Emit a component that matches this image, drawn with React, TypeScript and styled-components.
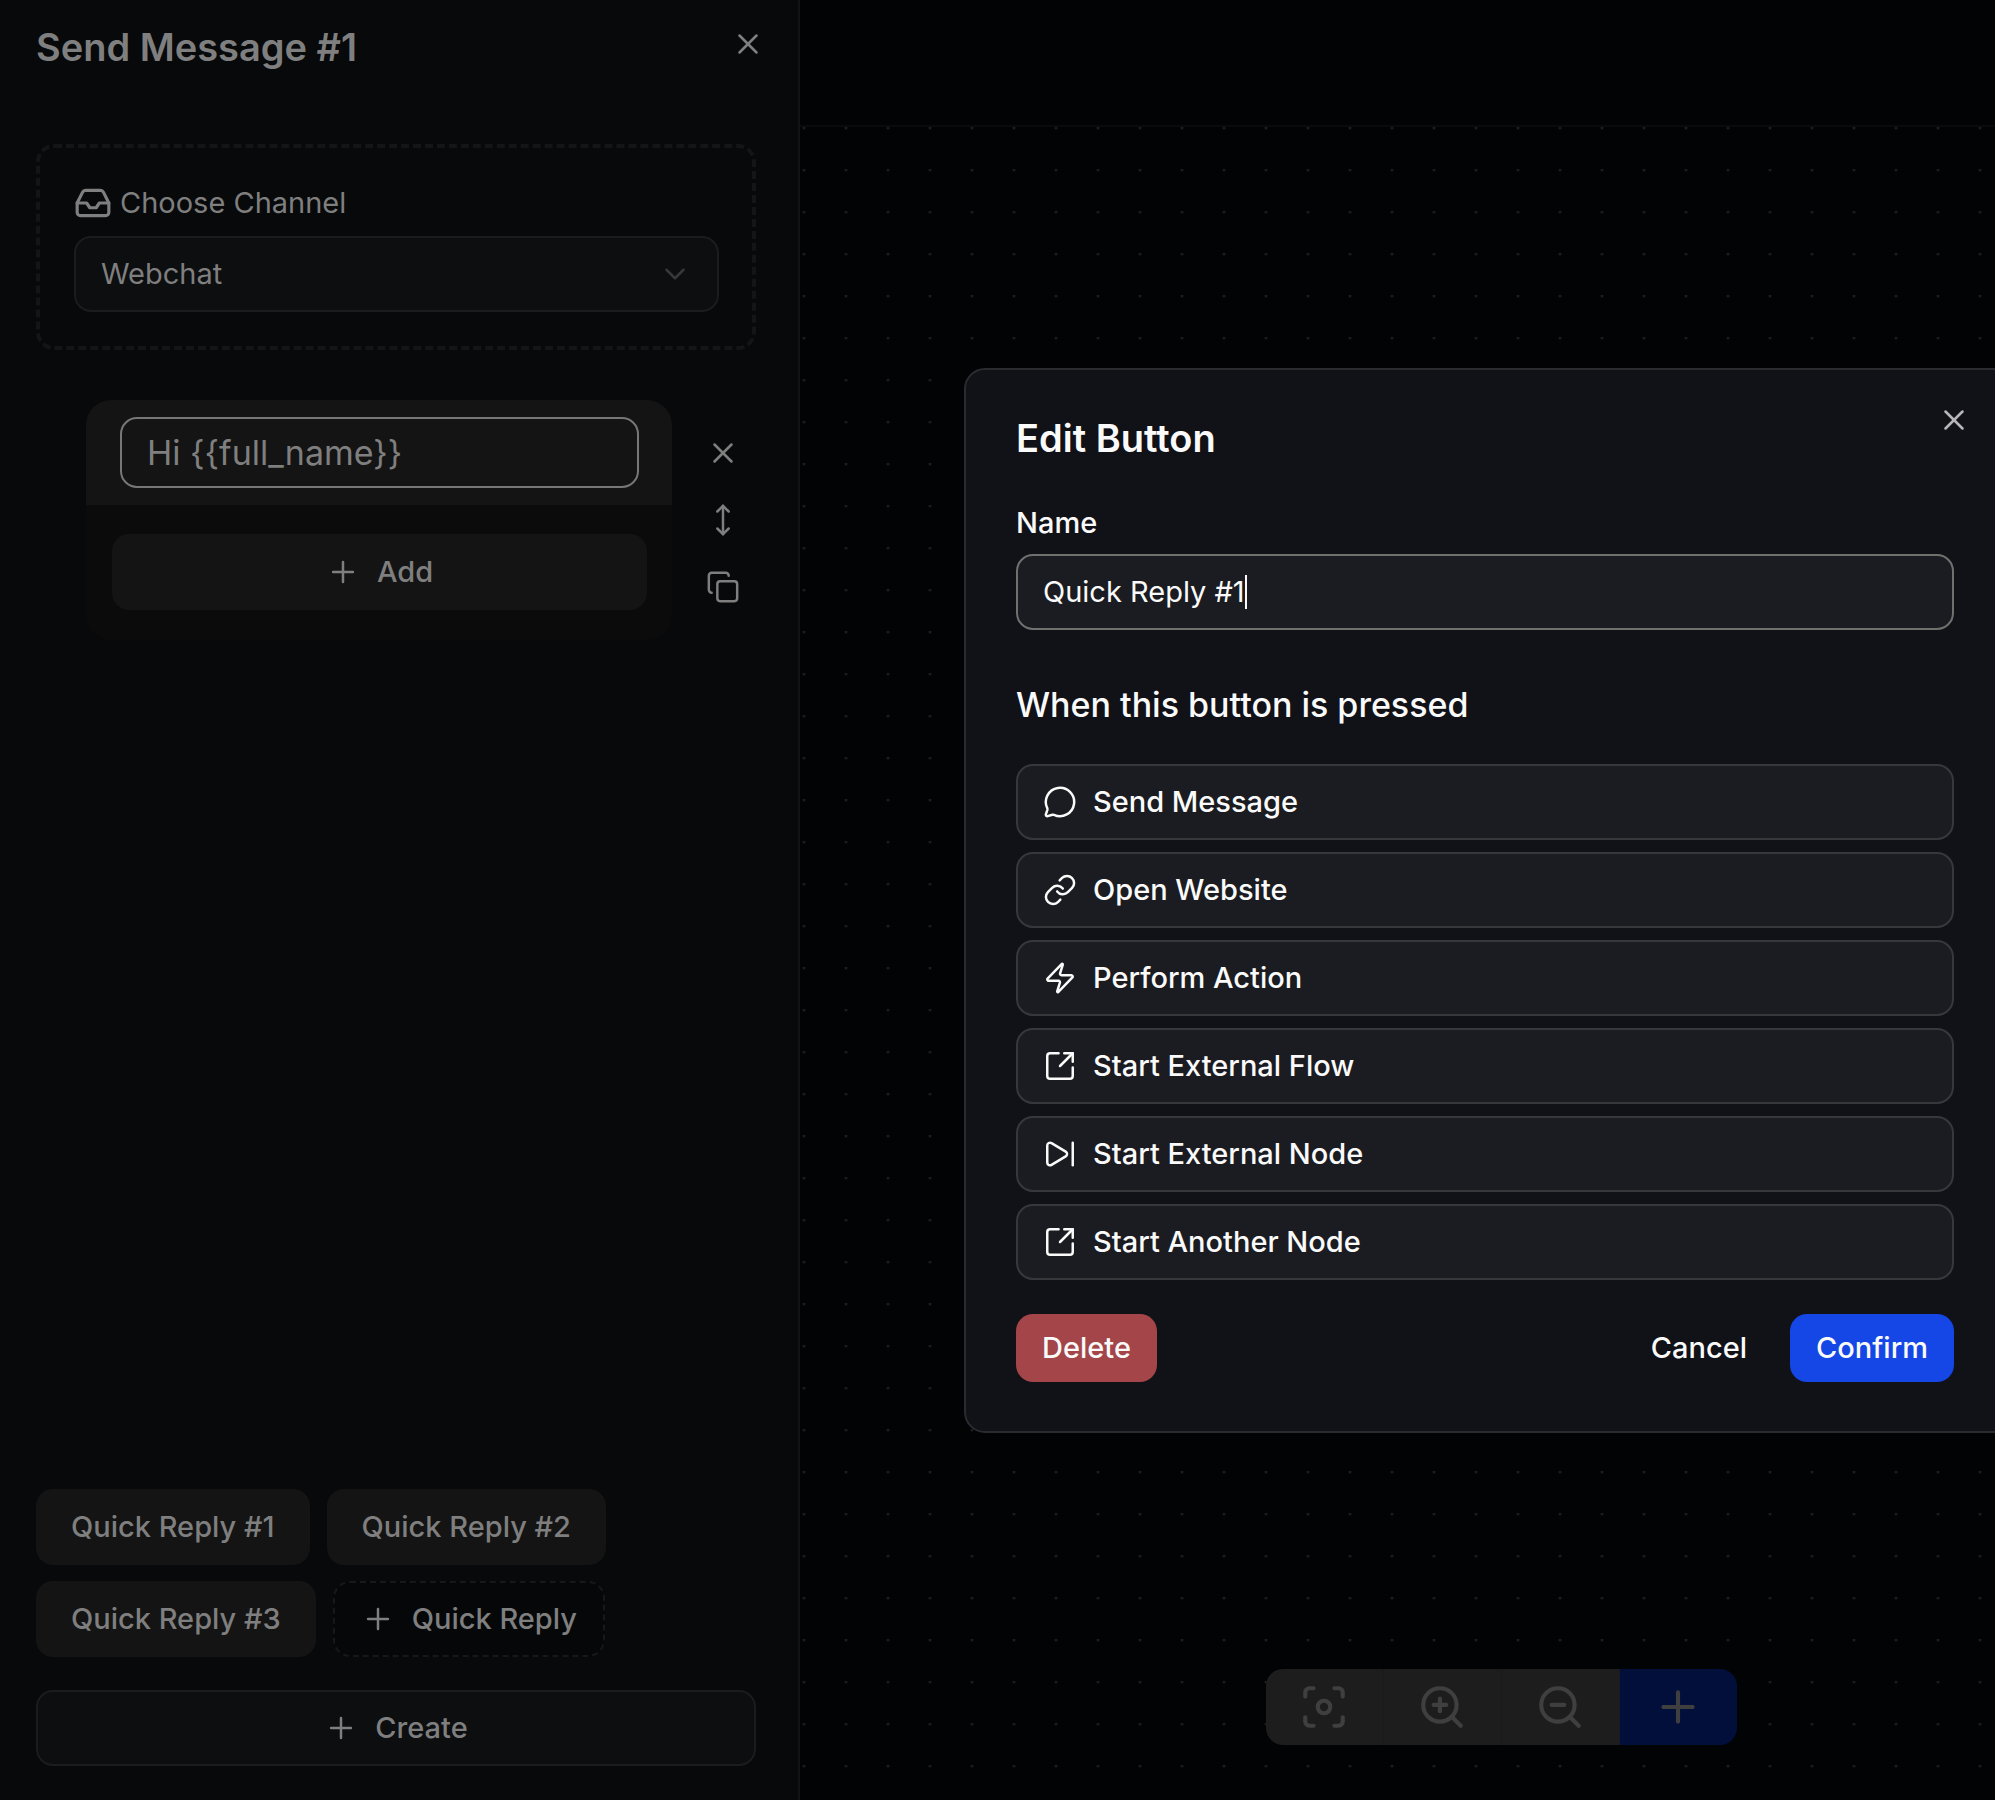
import React, { useState } from 'react';
import styled, { createGlobalStyle, css } from 'styled-components';
import {
  ChevronDown,
  Copy,
  Focus,
  Inbox,
  Link,
  MessageCircle,
  MoveVertical,
  Plus,
  SkipForward,
  SquareArrowOutUpRight,
  X,
  Zap,
  ZoomIn,
  ZoomOut,
} from 'lucide-react';

const color = {
  panel: '#08090b',
  panelLine: '#111214',
  canvas: '#020305',
  muted: '#7f7f7f',
  chip: '#141414',
  modal: '#111118',
  field: '#1b1c21',
  fieldLine: '#37383c',
};

const GlobalStyle = createGlobalStyle`
  * { box-sizing: border-box; }
  body {
    margin: 0;
    background: ${color.canvas};
    font-family: Inter, "Liberation Sans", sans-serif;
    font-size: 29px;
    line-height: 42px;
  }
  button, input, select {
    font: inherit;
    color: inherit;
    margin: 0;
    outline: none;
  }
  button { cursor: pointer; }
`;

const Screen = styled.div`
  position: relative;
  display: flex;
  min-height: 100vh;
  overflow: hidden;
`;

const Panel = styled.aside`
  display: flex;
  flex-direction: column;
  flex: 0 0 auto;
  width: 800px;
  background: ${color.panel};
  border-right: 2px solid ${color.panelLine};
  color: ${color.muted};
`;

const PanelHeader = styled.header`
  display: flex;
  justify-content: space-between;
  align-items: flex-start;
  padding: 24px 30px 0 36px;
`;

const PanelTitle = styled.h1`
  margin: 0;
  font-size: 38px;
  font-weight: 600;
  line-height: 46px;
`;

const IconButton = styled.button`
  display: grid;
  place-items: center;
  width: 40px;
  height: 40px;
  padding: 0;
  border: 0;
  background: none;
`;

const PanelBody = styled.div`
  display: flex;
  flex-direction: column;
  flex: 1;
  gap: 50px;
  padding: 74px 42px 0 36px;
`;

const ChannelBox = styled.section`
  display: flex;
  flex-direction: column;
  gap: 12px;
  padding: 34px 33px 34px 34px;
  border: 4px dashed #141517;
  border-radius: 18px;
`;

const ChannelLabel = styled.label`
  display: flex;
  align-items: center;
  gap: 8px;
`;

const SelectWrap = styled.div`
  display: grid;
  align-items: center;
  > * { grid-area: 1 / 1; }
  > svg {
    justify-self: end;
    margin-right: 27px;
    color: #37383a;
    pointer-events: none;
  }
`;

const ChannelSelect = styled.select`
  appearance: none;
  width: 100%;
  height: 76px;
  padding: 0 25px;
  border: 2px solid #1b1c1e;
  border-radius: 17px;
  background: #0d0e10;
`;

const MessageBlock = styled.section`
  display: flex;
  gap: 31px;
  padding: 0 13px 0 50px;
`;

const MessageCard = styled.div`
  flex: 1;
  border-radius: 25px;
  overflow: hidden;
  background: #0b0b0b;
`;

const MessageHead = styled.div`
  padding: 17px 33px 17px 34px;
  background: ${color.chip};
`;

const MessageInput = styled.input`
  display: block;
  width: 100%;
  height: 71px;
  padding: 0 25px;
  border: 2px solid #777;
  border-radius: 17px;
  background: transparent;
  font-size: 34px;
`;

const MessageBody = styled.div`
  padding: 29px 25px 30px 26px;
`;

const BlockActions = styled.div`
  display: flex;
  flex-direction: column;
  gap: 27px;
  padding-top: 33px;
`;

const PanelFooter = styled.footer`
  display: flex;
  flex-direction: column;
  gap: 33px;
  padding: 34px 42px 34px 36px;
`;

const ReplyList = styled.div`
  display: flex;
  flex-wrap: wrap;
  gap: 16px 17px;
`;

const PanelButton = styled.button<{ $kind?: 'solid' | 'dashed' | 'outline'; $wide?: boolean }>`
  display: flex;
  align-items: center;
  justify-content: center;
  gap: 17px;
  height: 76px;
  width: ${(p) => (p.$wide ? '100%' : 'auto')};
  padding: 0 35px;
  border: 0;
  border-radius: 17px;
  background: ${color.chip};
  font-weight: 500;
  ${(p) =>
    p.$kind === 'dashed' &&
    css`
      padding: 0 26px;
      border: 2px dashed #17181a;
      background: #050709;
    `}
  ${(p) =>
    p.$kind === 'outline' &&
    css`
      border: 2px solid #1b1c1e;
      background: #0d0e10;
    `}
`;

const Workspace = styled.main`
  display: flex;
  flex-direction: column;
  flex: 1;
  min-width: 0;
  background: ${color.canvas};
`;

const TopBar = styled.div`
  height: 127px;
  border-bottom: 2px solid #090a0b;
`;

const Canvas = styled.div`
  display: flex;
  flex: 1;
  align-items: flex-end;
  justify-content: center;
  padding: 0 0 55px 207px;
  background-image: radial-gradient(circle at 4px 1px, #1b1c1d 1px, transparent 2px);
  background-size: 42px 42px;
`;

const ToolBar = styled.div`
  display: flex;
  overflow: hidden;
  border-radius: 17px;
`;

const ToolButton = styled.button<{ $primary?: boolean }>`
  display: grid;
  place-items: center;
  width: ${(p) => (p.$primary ? '117px' : '118px')};
  height: 76px;
  padding: 0;
  border: 0;
  border-right: ${(p) => (p.$primary ? '0' : '1px solid #1a1a1a')};
  background: ${(p) => (p.$primary ? '#020f3b' : '#1d1d1d')};
  color: #3f3f3f;
`;

const Overlay = styled.div`
  position: absolute;
  inset: 0;
  display: flex;
  align-items: center;
  justify-content: flex-end;
`;

const Modal = styled.form`
  position: relative;
  display: flex;
  flex-direction: column;
  flex: 0 0 auto;
  width: 1061px;
  margin-right: -30px;
  padding: 49px 69px 49px 50px;
  border: 2px solid #2a2b2f;
  border-radius: 21px;
  background: ${color.modal};
  color: #fafafa;
  font-weight: 500;
`;

const ModalClose = styled(IconButton)`
  position: absolute;
  top: 30px;
  right: 49px;
  color: #b8b8ba;
`;

const ModalTitle = styled.h2`
  margin: 0 0 50px;
  font-size: 38px;
  font-weight: 600;
  line-height: 38px;
`;

const NameLabel = styled.label`
  margin-bottom: 15px;
  line-height: 32px;
`;

const NameField = styled.div`
  display: flex;
  align-items: center;
  height: 76px;
  padding: 0 25px;
  border: 2px solid #70716f;
  border-radius: 17px;
  background: ${color.field};
  font-weight: 400;
`;

const NameInput = styled.input`
  field-sizing: content;
  padding: 0;
  border: 0;
  background: none;
  caret-color: transparent;
`;

const Caret = styled.span`
  width: 2px;
  height: 34px;
  background: #fafafa;
`;

const ModalHeading = styled.h3`
  margin: 55px 0 39px;
  font-size: 34px;
  font-weight: 500;
  line-height: 40px;
`;

const OptionList = styled.div`
  display: flex;
  flex-direction: column;
  gap: 12px;
`;

const OptionButton = styled.button`
  display: flex;
  align-items: center;
  gap: 16px;
  height: 76px;
  padding: 0 25px;
  border: 2px solid ${color.fieldLine};
  border-radius: 17px;
  background: ${color.field};
  font-weight: 500;
`;

const ModalFooter = styled.div`
  display: flex;
  gap: 17px;
  margin-top: 34px;
`;

const ModalButton = styled.button<{ $bg?: string; $first?: boolean }>`
  height: 68px;
  margin-right: ${(p) => (p.$first ? 'auto' : '0')};
  padding: 0 26px;
  border: 0;
  border-radius: 17px;
  background: ${(p) => p.$bg ?? 'none'};
  font-weight: 500;
`;

const options = [
  { label: 'Send Message', Icon: MessageCircle },
  { label: 'Open Website', Icon: Link },
  { label: 'Perform Action', Icon: Zap },
  { label: 'Start External Flow', Icon: SquareArrowOutUpRight },
  { label: 'Start External Node', Icon: SkipForward },
  { label: 'Start Another Node', Icon: SquareArrowOutUpRight },
];

const replies = ['Quick Reply #1', 'Quick Reply #2', 'Quick Reply #3'];

const small = { size: 34, strokeWidth: 1.75 };

export default function App() {
  const [name, setName] = useState('Quick Reply #1');
  const [message, setMessage] = useState('Hi {{full_name}}');

  return (
    <>
      <GlobalStyle />
      <Screen>
        <Panel>
          <PanelHeader>
            <PanelTitle>Send Message #1</PanelTitle>
            <IconButton type="button" aria-label="Close panel"><X {...small} /></IconButton>
          </PanelHeader>
          <PanelBody>
            <ChannelBox>
              <ChannelLabel htmlFor="channel">
                <Inbox size={38} strokeWidth={2} />
                Choose Channel
              </ChannelLabel>
              <SelectWrap>
                <ChannelSelect id="channel" defaultValue="webchat">
                  <option value="webchat">Webchat</option>
                </ChannelSelect>
                <ChevronDown {...small} />
              </SelectWrap>
            </ChannelBox>
            <MessageBlock>
              <MessageCard>
                <MessageHead>
                  <MessageInput
                    aria-label="Message text"
                    value={message}
                    onChange={(e) => setMessage(e.target.value)}
                  />
                </MessageHead>
                <MessageBody>
                  <PanelButton type="button" $wide><Plus {...small} />Add</PanelButton>
                </MessageBody>
              </MessageCard>
              <BlockActions>
                <IconButton type="button" aria-label="Remove"><X {...small} /></IconButton>
                <IconButton type="button" aria-label="Move"><MoveVertical {...small} /></IconButton>
                <IconButton type="button" aria-label="Duplicate"><Copy {...small} /></IconButton>
              </BlockActions>
            </MessageBlock>
          </PanelBody>
          <PanelFooter>
            <ReplyList>
              {replies.map((reply) => (
                <PanelButton type="button" key={reply}>{reply}</PanelButton>
              ))}
              <PanelButton type="button" $kind="dashed"><Plus {...small} />Quick Reply</PanelButton>
            </ReplyList>
            <PanelButton type="button" $kind="outline" $wide><Plus {...small} />Create</PanelButton>
          </PanelFooter>
        </Panel>
        <Workspace>
          <TopBar />
          <Canvas>
            <ToolBar>
              <ToolButton type="button" aria-label="Fit view"><Focus size={50} /></ToolButton>
              <ToolButton type="button" aria-label="Zoom in"><ZoomIn size={50} /></ToolButton>
              <ToolButton type="button" aria-label="Zoom out"><ZoomOut size={50} /></ToolButton>
              <ToolButton type="button" aria-label="Add node" $primary><Plus size={50} /></ToolButton>
            </ToolBar>
          </Canvas>
        </Workspace>
        <Overlay>
          <Modal role="dialog" aria-labelledby="dialog-title" onSubmit={(e) => e.preventDefault()}>
            <ModalTitle id="dialog-title">Edit Button</ModalTitle>
            <NameLabel htmlFor="name">Name</NameLabel>
            <NameField>
              <NameInput id="name" value={name} onChange={(e) => setName(e.target.value)} />
              <Caret />
            </NameField>
            <ModalHeading>When this button is pressed</ModalHeading>
            <OptionList>
              {options.map(({ label, Icon }) => (
                <OptionButton type="button" key={label}><Icon {...small} />{label}</OptionButton>
              ))}
            </OptionList>
            <ModalFooter>
              <ModalButton type="button" $bg="#a34549" $first>Delete</ModalButton>
              <ModalButton type="button">Cancel</ModalButton>
              <ModalButton type="submit" $bg="#1447e6">Confirm</ModalButton>
            </ModalFooter>
            <ModalClose type="button" aria-label="Close dialog"><X {...small} /></ModalClose>
          </Modal>
        </Overlay>
      </Screen>
    </>
  );
}
